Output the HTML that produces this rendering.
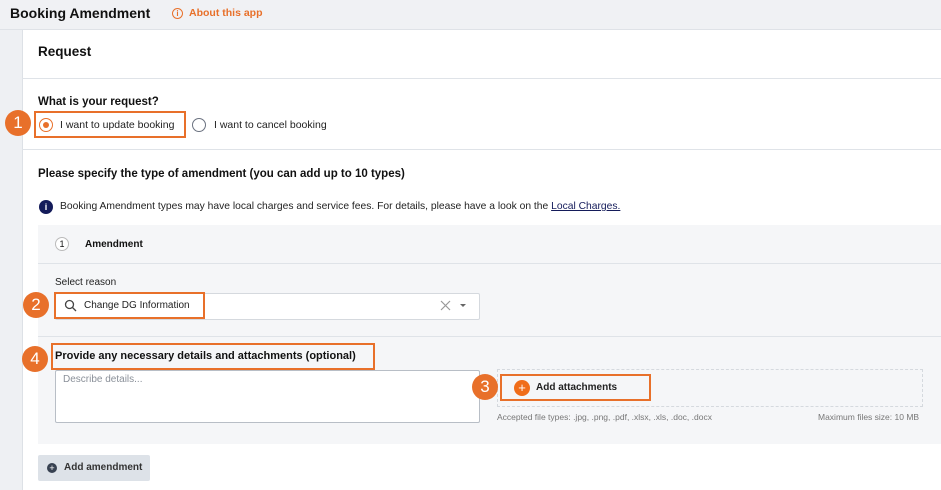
<!DOCTYPE html>
<html><head><meta charset="utf-8"><style>
*{box-sizing:border-box;margin:0;padding:0}
body{width:941px;height:490px;overflow:hidden;background:#eef0f3;font-family:"Liberation Sans",Arial,sans-serif;color:#111;position:relative}
.a{position:absolute}
.hdr{left:0;top:0;width:941px;height:30px;background:#f0f1f4;border-bottom:1px solid #dfe2e7}
.main{left:22px;top:30px;width:919px;height:460px;background:#fff;border-left:1px solid #dde1e6}
.line{height:1px;background:#dfe3e8}
.orange{border:2px solid #e8702a}
.badge{width:26px;height:26px;border-radius:50%;background:#e8702a;color:#fff;font-size:17px;text-align:center;line-height:26px}
.t{font-size:10.5px;color:#222;white-space:nowrap}
</style></head><body>
<div class="a hdr"></div>
<div class="a" style="left:10px;top:5px;font-size:14px;font-weight:bold">Booking Amendment</div>
<div class="a" style="left:172px;top:8px;width:11px;height:11px;border:1.3px solid #e8702a;border-radius:50%;color:#e8702a;font-size:8px;text-align:center;line-height:9px;font-weight:bold">i</div>
<div class="a" style="left:189px;top:7px;font-size:10.5px;color:#e8702a;font-weight:bold">About this app</div>
<div class="a main"></div>
<div class="a" style="left:38px;top:44px;font-size:13.5px;font-weight:bold">Request</div>
<div class="a line" style="left:22px;top:78px;width:919px"></div>
<div class="a" style="left:38px;top:96px;font-size:11.5px;font-weight:bold">What is your request?</div>
<div class="a badge" style="left:5px;top:110px">1</div>
<div class="a orange" style="left:34px;top:111px;width:152px;height:27px"></div>
<div class="a" style="left:39px;top:118px;width:14px;height:14px;border:1.5px solid #e8702a;border-radius:50%"></div>
<div class="a" style="left:43px;top:122px;width:6px;height:6px;background:#e8702a;border-radius:50%"></div>
<div class="a t" style="left:60px;top:119px">I want to update booking</div>
<div class="a" style="left:192px;top:118px;width:14px;height:14px;border:1.3px solid #6b7280;border-radius:50%"></div>
<div class="a t" style="left:214px;top:119px">I want to cancel booking</div>
<div class="a line" style="left:22px;top:149px;width:919px"></div>
<div class="a" style="left:38px;top:168px;font-size:11.5px;font-weight:bold">Please specify the type of amendment (you can add up to 10 types)</div>
<div class="a" style="left:39px;top:200px;width:14px;height:14px;border-radius:50%;background:#141b5a;color:#fff;font-size:9px;text-align:center;line-height:14px;font-weight:bold">i</div>
<div class="a t" style="left:60px;top:201px;font-size:10.3px">Booking Amendment types may have local charges and service fees. For details, please have a look on the <span style="color:#141b5a;text-decoration:underline">Local Charges.</span></div>
<div class="a" style="left:38px;top:225px;width:903px;height:219px;background:#f5f6f8"></div>
<div class="a" style="left:55px;top:237px;width:14px;height:14px;border:1px solid #bbb;border-radius:50%;background:#fff;font-size:9px;text-align:center;line-height:12px">1</div>
<div class="a" style="left:85px;top:239px;font-size:10px;font-weight:bold">Amendment</div>
<div class="a line" style="left:38px;top:263px;width:903px"></div>
<div class="a t" style="left:55px;top:277px;font-size:10px">Select reason</div>
<div class="a" style="left:55px;top:293px;width:425px;height:27px;background:#fff;border:1px solid #d5d9de;border-radius:2px"></div>
<div class="a badge" style="left:23px;top:292px">2</div>
<div class="a orange" style="left:54px;top:292px;width:151px;height:27px"></div>
<svg class="a" style="left:64px;top:299px" width="14" height="14"><circle cx="5.5" cy="5.5" r="4" fill="none" stroke="#444" stroke-width="1.3"/><path d="M8.5 8.5L12 12" stroke="#444" stroke-width="1.3"/></svg>
<div class="a t" style="left:84px;top:300px;font-size:10px">Change DG Information</div>
<svg class="a" style="left:440px;top:300px" width="30" height="12"><path d="M1 1L10 10M10 1L1 10" stroke="#999" stroke-width="1.2"/><path d="M20 4L26 4L23 7Z" fill="#666"/></svg>
<div class="a line" style="left:38px;top:336px;width:903px"></div>
<div class="a badge" style="left:22px;top:346px">4</div>
<div class="a orange" style="left:51px;top:343px;width:324px;height:27px"></div>
<div class="a" style="left:55px;top:350px;font-size:11px;font-weight:bold;white-space:nowrap">Provide any necessary details and attachments (optional)</div>
<div class="a" style="left:55px;top:370px;width:425px;height:53px;background:#fff;border:1px solid #b8bec6;border-radius:2px"></div>
<div class="a t" style="left:63px;top:374px;font-size:10px;color:#8a9099">Describe details...</div>
<div class="a" style="left:497px;top:369px;width:426px;height:38px;border:1px dashed #d5d9de"></div>
<div class="a badge" style="left:472px;top:374px">3</div>
<div class="a orange" style="left:500px;top:374px;width:151px;height:27px"></div>
<div class="a" style="left:514px;top:380px;width:16px;height:16px;border-radius:50%;background:#f06d1a;color:#fff;font-size:13px;text-align:center;line-height:16px">+</div>
<div class="a t" style="left:536px;top:382px;font-size:10px;font-weight:bold">Add attachments</div>
<div class="a t" style="left:497px;top:412px;font-size:8.5px;color:#777">Accepted file types: .jpg, .png, .pdf, .xlsx, .xls, .doc, .docx</div>
<div class="a t" style="left:818px;top:412px;font-size:8.5px;color:#777">Maximum files size: 10 MB</div>
<div class="a" style="left:38px;top:455px;width:112px;height:26px;background:#dde2e8;border-radius:2px"></div>
<div class="a" style="left:47px;top:463px;width:10px;height:10px;border-radius:50%;background:#374151;color:#fff;font-size:9px;text-align:center;line-height:10px">+</div>
<div class="a t" style="left:64px;top:462px;font-size:10px;font-weight:bold;color:#333">Add amendment</div>
</body></html>
